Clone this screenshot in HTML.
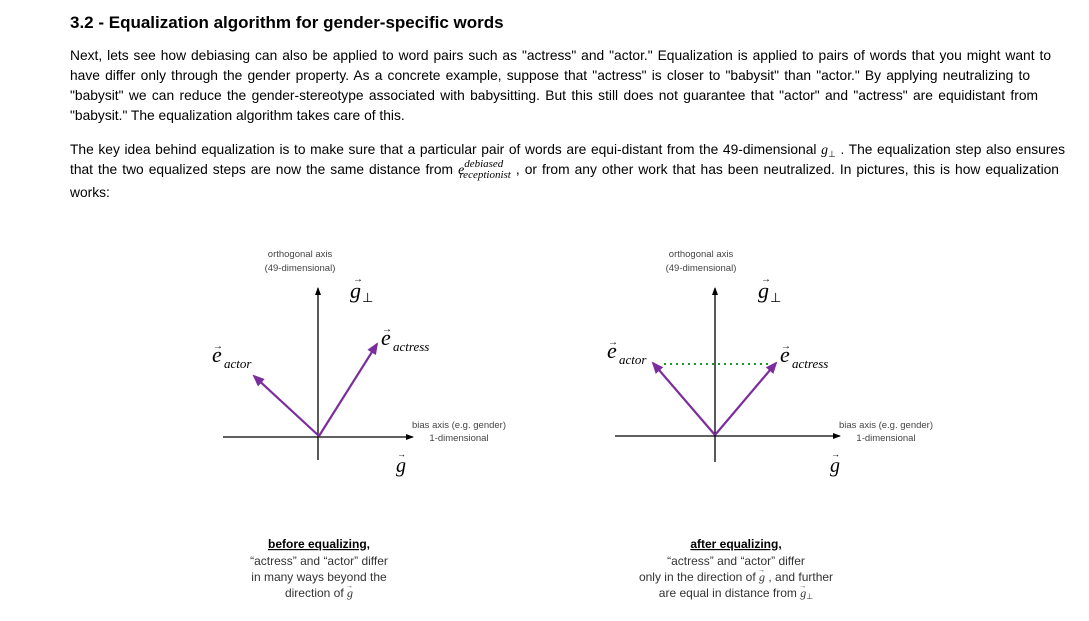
<!DOCTYPE html>
<html><head><style>
body{margin:0;background:#fff;font-family:"Liberation Sans",Arial,sans-serif;color:#000;}
h3{position:absolute;left:70px;top:13px;margin:0;font-size:17px;font-weight:bold;white-space:nowrap}
.l{position:absolute;left:70px;font-size:13.8px;line-height:20px;white-space:nowrap;text-align:justify;text-align-last:justify}
.n{position:absolute;left:70px;font-size:13.8px;line-height:20px;white-space:nowrap}
.m{font-family:"Liberation Serif",serif;font-style:italic}
svg{position:absolute;left:0;top:0}
</style></head><body>
<h3>3.2 - Equalization algorithm for gender-specific words</h3>
<div class="l" style="top:46px;width:981px">Next, lets see how debiasing can also be applied to word pairs such as "actress" and "actor." Equalization is applied to pairs of words that you might want to</div>
<div class="l" style="top:66px;width:960px">have differ only through the gender property. As a concrete example, suppose that "actress" is closer to "babysit" than "actor." By applying neutralizing to</div>
<div class="l" style="top:86px;width:968px">"babysit" we can reduce the gender-stereotype associated with babysitting. But this still does not guarantee that "actor" and "actress" are equidistant from</div>
<div class="n" style="top:106px">"babysit." The equalization algorithm takes care of this.</div>
<div class="l" style="top:140px;width:995px">The key idea behind equalization is to make sure that a particular pair of words are equi-distant from the 49-dimensional <span class="m">g</span><span style="font-size:9px;position:relative;top:3px">⊥</span> . The equalization step also ensures</div>
<div class="l" style="top:160px;width:989px">that the two equalized steps are now the same distance from <span class="m">e<span style="position:relative;top:-7px;font-size:11px">debiased</span></span><span class="m" style="position:relative;left:-44px;top:4px;font-size:11px;margin-right:-44px">receptionist</span> , or from any other work that has been neutralized. In pictures, this is how equalization</div>
<div class="n" style="top:183px">works:</div>
<svg width="1089" height="621" font-family="Liberation Sans,sans-serif">
<defs>
<marker id="a" markerWidth="8" markerHeight="8" refX="7" refY="4" orient="auto" markerUnits="userSpaceOnUse"><path d="M0,1L8,4L0,7z" fill="#000"/></marker>
<marker id="p" markerWidth="12" markerHeight="10" refX="10" refY="5" orient="auto" markerUnits="userSpaceOnUse"><path d="M0,0L12,5L0,10z" fill="#7b2d9e"/></marker>
</defs>
<g stroke="#000" stroke-width="1.3">
<line x1="318" y1="460" x2="318" y2="288" marker-end="url(#a)"/>
<line x1="223" y1="437" x2="413" y2="437" marker-end="url(#a)"/>
<line x1="715" y1="462" x2="715" y2="288" marker-end="url(#a)"/>
<line x1="615" y1="436" x2="840" y2="436" marker-end="url(#a)"/>
</g>
<g stroke="#7b2d9e" stroke-width="2.2">
<line x1="319" y1="436" x2="254" y2="376" marker-end="url(#p)"/>
<line x1="319" y1="436" x2="377" y2="344" marker-end="url(#p)"/>
<line x1="715" y1="435" x2="653" y2="363" marker-end="url(#p)"/>
<line x1="715" y1="435" x2="776" y2="363" marker-end="url(#p)"/>
</g>
<line x1="664" y1="364" x2="772" y2="364" stroke="#1a9a2a" stroke-width="2" stroke-dasharray="2,4"/>
<g font-size="9.5" fill="#444" text-anchor="middle">
<text x="300" y="257">orthogonal axis</text><text x="300" y="271">(49-dimensional)</text>
<text x="701" y="257">orthogonal axis</text><text x="701" y="271">(49-dimensional)</text>
<text x="459" y="428">bias axis (e.g. gender)</text><text x="459" y="441">1-dimensional</text>
<text x="886" y="428">bias axis (e.g. gender)</text><text x="886" y="441">1-dimensional</text>
</g>
<g font-family="Liberation Serif,serif" font-style="italic">
<text x="350" y="298" font-size="22">g</text><text x="362" y="302" font-size="13" font-style="normal">⊥</text><text x="353" y="282" font-size="10" font-style="normal">→</text>
<text x="758" y="298" font-size="22">g</text><text x="770" y="302" font-size="13" font-style="normal">⊥</text><text x="761" y="282" font-size="10" font-style="normal">→</text>
<text x="396" y="472" font-size="20">g</text><text x="397" y="457" font-size="9" font-style="normal">→</text>
<text x="830" y="472" font-size="20">g</text><text x="831" y="457" font-size="9" font-style="normal">→</text>
<text x="212" y="362" font-size="22">e</text><text x="213" y="349" font-size="10" font-style="normal">→</text><text x="224" y="368" font-size="13">actor</text>
<text x="381" y="345" font-size="22">e</text><text x="382" y="332" font-size="10" font-style="normal">→</text><text x="393" y="351" font-size="13">actress</text>
<text x="607" y="358" font-size="22">e</text><text x="608" y="345" font-size="10" font-style="normal">→</text><text x="619" y="364" font-size="13">actor</text>
<text x="780" y="362" font-size="22">e</text><text x="781" y="349" font-size="10" font-style="normal">→</text><text x="792" y="368" font-size="13">actress</text>
</g>
<g font-size="12" fill="#333" text-anchor="middle">
<text x="319" y="548" font-weight="bold" fill="#000" text-decoration="underline">before equalizing,</text>
<text x="319" y="565">“actress” and “actor” differ</text>
<text x="319" y="581">in many ways beyond the</text>
<text x="319" y="597">direction of <tspan font-family="Liberation Serif,serif" font-style="italic">g</tspan><tspan dx="-7" dy="-9" font-size="7">→</tspan><tspan dy="9"> </tspan></text>
<text x="736" y="548" font-weight="bold" fill="#000" text-decoration="underline">after equalizing,</text>
<text x="736" y="565">“actress” and “actor” differ</text>
<text x="736" y="581">only in the direction of <tspan font-family="Liberation Serif,serif" font-style="italic">g</tspan><tspan dx="-7" dy="-9" font-size="7">→</tspan><tspan dy="9"> , and further</tspan></text>
<text x="736" y="597">are equal in distance from <tspan font-family="Liberation Serif,serif" font-style="italic">g</tspan><tspan dx="-7" dy="-9" font-size="7">→</tspan><tspan dy="11" font-size="8">⊥</tspan></text>
</g>
</svg>
</body></html>
